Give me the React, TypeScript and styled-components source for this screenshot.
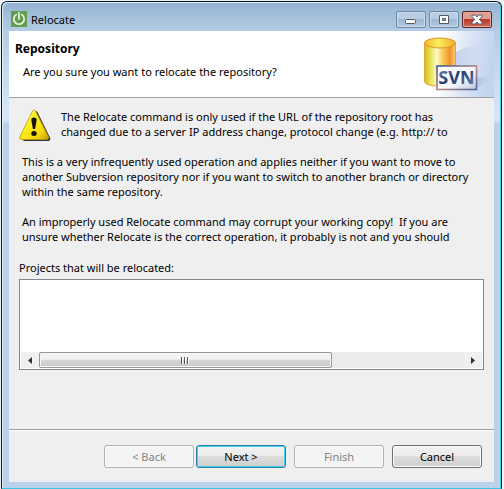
import React from "react";
import styled, { createGlobalStyle } from "styled-components";

const GlobalStyle = createGlobalStyle`
  * { box-sizing: border-box; }
  html, body, #root { height: 100%; }
  body {
    margin: 0;
    background: #edf4f7;
    color: #000;
    font: 11px/15px "Noto Sans", "Segoe UI", sans-serif;
  }
`;

const Desktop = styled.div`
  min-height: 100%;
  display: flex;
  padding: 1px 2px 0 1px;
`;

const Window = styled.section`
  flex: 1;
  display: flex;
  flex-direction: column;
  padding: 0 7px 6px;
  border: 1px solid #0b1a22;
  border-bottom: 1px solid #3cc4e4;
  border-radius: 6px 6px 0 0;
  box-shadow: inset 1px 1px 0 #e4f1fa, inset -1px 0 0 #52cbe6;
  background: linear-gradient(#94b3d1 0, #b3cbe4 28px, #c5daee 70px, #d6e7f7 118px, #b9d1ea 122px);
`;

const TitleBar = styled.header`
  height: 29px;
  display: flex;
  align-items: center;
  gap: 4px;
  padding: 5px 2px 0;
`;

const Title = styled.h1`
  flex: 1;
  margin: 0;
  font-size: 11px;
  font-weight: 400;
`;

const Controls = styled.div`
  display: flex;
  gap: 3px;
`;

const ControlButton = styled.button<{ $danger?: boolean }>`
  width: 30px;
  height: 17px;
  padding: 0;
  display: grid;
  place-items: center;
  border: 1px solid ${(p) => (p.$danger ? "#5d2428" : "#71879f")};
  border-radius: 2px;
  box-shadow: inset 0 0 0 1px ${(p) => (p.$danger ? "#e3a79e" : "#c9dbed")};
  background: ${(p) =>
    p.$danger
      ? "linear-gradient(#dda095 0 45%, #b93a2a 50%, #cf6950)"
      : "linear-gradient(#b9cee4 0 45%, #9eb8d3 50%, #b3cae1)"};
`;

const Content = styled.main`
  flex: 1;
  display: flex;
  flex-direction: column;
  background: #efefef;
`;

const Banner = styled.div`
  height: 67px;
  display: flex;
  justify-content: space-between;
  background: #fff;
  border-bottom: 1px solid #a0a0a0;
`;

const BannerText = styled.div`
  padding: 10px 6px;
`;

const Heading = styled.h2`
  margin: 0 0 8px;
  font-size: 12px;
  line-height: 15px;
  font-weight: 700;
`;

const Question = styled.p`
  margin: 0 0 0 8px;
`;

const Body = styled.div`
  flex: 1;
  padding: 11px 10px 10px;
`;

const Warning = styled.div`
  display: flex;
  align-items: flex-start;
  gap: 10px;
  margin-bottom: 12px;
`;

const Message = styled.p`
  margin: 0;
  white-space: pre-wrap;
`;

const Paragraph = styled(Message)`
  margin: 0 0 15px 3px;
`;

const ListLabel = styled.h3`
  margin: 16px 0 4px;
  font-size: 11px;
  font-weight: 400;
`;

const ProjectList = styled.div`
  height: 91px;
  display: flex;
  flex-direction: column;
  justify-content: flex-end;
  padding: 1px;
  background: #fff;
  border: 1px solid #828790;
`;

const ScrollTrack = styled.div`
  height: 16px;
  display: flex;
  background: #ebebeb;
`;

const ScrollArrow = styled.button`
  width: 18px;
  padding: 0;
  display: grid;
  place-items: center;
  border: 0;
  background: #efefef;
`;

const ScrollRail = styled.div`
  flex: 1;
  display: flex;
`;

const ScrollThumb = styled.div`
  width: 69%;
  display: grid;
  place-items: center;
  border: 1px solid #979797;
  border-radius: 2px;
  box-shadow: inset 0 0 0 1px #f7f7f7;
  background: linear-gradient(#f2f2f2 0 45%, #d7d7da 50%, #c7c7ca);
`;

const Footer = styled.footer`
  height: 53px;
  display: flex;
  justify-content: flex-end;
  align-items: flex-start;
  gap: 8px;
  padding: 15px 12px 0;
  border-top: 1px solid #a0a0a0;
  box-shadow: inset 0 1px 0 #fff;
`;

const ButtonPair = styled.div`
  display: flex;
  gap: 2px;
`;

const Button = styled.button<{ $primary?: boolean }>`
  width: 90px;
  height: 23px;
  padding: 0;
  font: inherit;
  color: #000;
  border: 1px solid ${(p) => (p.$primary ? "#2c7fa8" : "#707070")};
  border-radius: 3px;
  box-shadow: inset 0 0 0 1px ${(p) => (p.$primary ? "#45cdf2" : "#fafafa")};
  background: linear-gradient(#f2f2f2 0, #ebebeb 48%, #dcdcdc 50%, #cfcfcf);

  &:disabled {
    color: #838383;
    border-color: #adb2b5;
    background: #f4f4f4;
  }
`;

const PowerIcon = () => (
  <svg width="16" height="16" viewBox="0 0 16 16" aria-hidden="true">
    <rect width="16" height="16" fill="#629e50" />
    <path d="M5.200 3.600a5.200 5.200 0 1 0 5.600 0M8 1.800v6.400" fill="none" stroke="#eff8e9" strokeWidth="1.600" strokeLinecap="round" />
  </svg>
);

const WarningIcon = () => (
  <svg width="32" height="33" viewBox="0 0 32 33" aria-hidden="true">
    <defs>
      <linearGradient id="warn" x1="0" y1="0" x2="1" y2="1">
        <stop offset="0" stopColor="#fff78c" />
        <stop offset=".4" stopColor="#fdee1c" />
        <stop offset=".75" stopColor="#f5d80c" />
        <stop offset="1" stopColor="#c99700" />
      </linearGradient>
    </defs>
    <path d="M15.500 3q1-2 3 0L31.200 29q.6 3-2.200 3H5q-2-1-1-3z" fill="#34343c" />
    <path d="M13.500 2q1-2 3 0L29.500 28q.5 2.500-2 2.500H2q-2-.5-1-3z" fill="url(#warn)" stroke="#b59a14" strokeWidth=".8" />
    <path d="M12.300 11q0-2.500 2.700-2.500t2.700 2.500l-1.600 9h-2.200z" fill="#15120a" />
    <ellipse cx="15" cy="24.500" rx="2.700" ry="2.500" fill="#15120a" />
  </svg>
);

const SvnArt = () => (
  <svg width="86" height="66" viewBox="0 0 86 66" role="img" aria-label="SVN">
    <defs>
      <linearGradient id="haze" x1="0" y1="0" x2="1" y2=".1">
        <stop offset=".42" stopColor="#fff" />
        <stop offset=".7" stopColor="#dee6f5" />
        <stop offset="1" stopColor="#c3d4ef" />
      </linearGradient>
      <linearGradient id="shade" x1="0" x2="1">
        <stop offset="0" stopColor="#a9bce2" />
        <stop offset="1" stopColor="#c3d1eb" stopOpacity=".3" />
      </linearGradient>
      <linearGradient id="barrel">
        <stop offset="0" stopColor="#d5b426" />
        <stop offset=".15" stopColor="#e3dc42" />
        <stop offset=".4" stopColor="#fffbc5" />
        <stop offset=".6" stopColor="#f9c957" />
        <stop offset=".82" stopColor="#f0932e" />
        <stop offset="1" stopColor="#fbc970" />
      </linearGradient>
      <linearGradient id="lid">
        <stop offset="0" stopColor="#f6b82c" />
        <stop offset=".45" stopColor="#f7f05a" />
        <stop offset="1" stopColor="#f5a92c" />
      </linearGradient>
      <linearGradient id="plate" x1="0" y1="0" x2="1" y2="1">
        <stop offset="0" stopColor="#fff" />
        <stop offset=".6" stopColor="#f4f6fb" />
        <stop offset="1" stopColor="#b9c7e1" />
      </linearGradient>
      <linearGradient id="rim" x1="0" y1="0" x2="1" y2="1">
        <stop offset="0" stopColor="#43599a" />
        <stop offset=".55" stopColor="#b98a78" />
        <stop offset="1" stopColor="#4963a0" />
      </linearGradient>
      <linearGradient id="letters" x1="0" y1="0" x2="1" y2="1">
        <stop offset="0" stopColor="#8698c0" />
        <stop offset=".45" stopColor="#26396d" />
        <stop offset="1" stopColor="#7187b5" />
      </linearGradient>
    </defs>
    <rect width="86" height="66" fill="url(#haze)" />
    <path d="M48 21q12-8 24-4 4 6-4 17H48z" fill="url(#shade)" opacity=".55" />
    <path d="M69 47l15-3q-4 7-19 15z" fill="url(#shade)" />
    <path d="M16.500 12v38q0 5 15 5t16-5V12z" fill="url(#barrel)" stroke="#e3a83a" />
    <ellipse cx="32" cy="12" rx="15.500" ry="5" fill="url(#lid)" stroke="#dd962a" />
    <rect x="29" y="35" width="39.500" height="23.500" fill="url(#plate)" stroke="url(#rim)" strokeWidth="1.600" />
    <text x="48.500" y="53" textAnchor="middle" fontFamily="Noto Sans, sans-serif" fontSize="18" fontWeight="700" fill="url(#letters)">SVN</text>
  </svg>
);

const MinimizeIcon = () => (
  <svg width="12" height="11" viewBox="0 0 12 11" aria-hidden="true">
    <rect x=".5" y="5.500" width="10" height="4" rx="1" fill="#fff" stroke="#535865" />
  </svg>
);

const MaximizeIcon = () => (
  <svg width="12" height="11" viewBox="0 0 12 11" aria-hidden="true">
    <path d="M1.500 1.500h9v8h-9zM4.500 4.500v2h3v-2z" fill="#fff" fillRule="evenodd" stroke="#535865" />
  </svg>
);

const CloseIcon = () => (
  <svg width="12" height="11" viewBox="0 0 12 11" aria-hidden="true">
    <path d="M1 1h3.500L6 3l1.500-2H11v1.500L8.500 5.500 11 8.500V10H7.500L6 8l-1.500 2H1V8.500l2.500-3L1 2.500z" fill="#fff" stroke="#535865" />
  </svg>
);

const LeftArrow = () => (
  <svg width="4" height="7" viewBox="0 0 4 7" aria-hidden="true">
    <path d="M4 0v7L0 3.500z" fill="#333" />
  </svg>
);

const RightArrow = () => (
  <svg width="4" height="7" viewBox="0 0 4 7" aria-hidden="true">
    <path d="M0 0v7l4-3.500z" fill="#333" />
  </svg>
);

const Grip = () => (
  <svg width="9" height="7" viewBox="0 0 9 7" aria-hidden="true">
    <path d="M.5 0v7M3.500 0v7M6.500 0v7" stroke="#555" />
    <path d="M1.500 0v7M4.500 0v7M7.500 0v7" stroke="#fff" />
  </svg>
);

export default function App() {
  return (
    <>
      <GlobalStyle />
      <Desktop>
        <Window>
          <TitleBar>
            <PowerIcon />
            <Title>Relocate</Title>
            <Controls>
              <ControlButton aria-label="Minimize"><MinimizeIcon /></ControlButton>
              <ControlButton aria-label="Maximize"><MaximizeIcon /></ControlButton>
              <ControlButton $danger aria-label="Close"><CloseIcon /></ControlButton>
            </Controls>
          </TitleBar>
          <Content>
            <Banner>
              <BannerText>
                <Heading>Repository</Heading>
                <Question>Are you sure you want to relocate the repository?</Question>
              </BannerText>
              <SvnArt />
            </Banner>
            <Body>
              <Warning>
                <WarningIcon />
                <Message>
                  {"The Relocate command is only used if the URL of the repository root has\nchanged due to a server IP address change, protocol change (e.g. http:// to"}
                </Message>
              </Warning>
              <Paragraph>
                {"This is a very infrequently used operation and applies neither if you want to move to\nanother Subversion repository nor if you want to switch to another branch or directory\nwithin the same repository."}
              </Paragraph>
              <Paragraph>
                {"An improperly used Relocate command may corrupt your working copy!  If you are\nunsure whether Relocate is the correct operation, it probably is not and you should"}
              </Paragraph>
              <ListLabel id="projects-label">Projects that will be relocated:</ListLabel>
              <ProjectList role="listbox" aria-labelledby="projects-label">
                <ScrollTrack>
                  <ScrollArrow aria-label="Scroll left"><LeftArrow /></ScrollArrow>
                  <ScrollRail>
                    <ScrollThumb><Grip /></ScrollThumb>
                  </ScrollRail>
                  <ScrollArrow aria-label="Scroll right"><RightArrow /></ScrollArrow>
                </ScrollTrack>
              </ProjectList>
            </Body>
            <Footer>
              <ButtonPair>
                <Button disabled>&lt; Back</Button>
                <Button $primary>Next &gt;</Button>
              </ButtonPair>
              <Button disabled>Finish</Button>
              <Button>Cancel</Button>
            </Footer>
          </Content>
        </Window>
      </Desktop>
    </>
  );
}
